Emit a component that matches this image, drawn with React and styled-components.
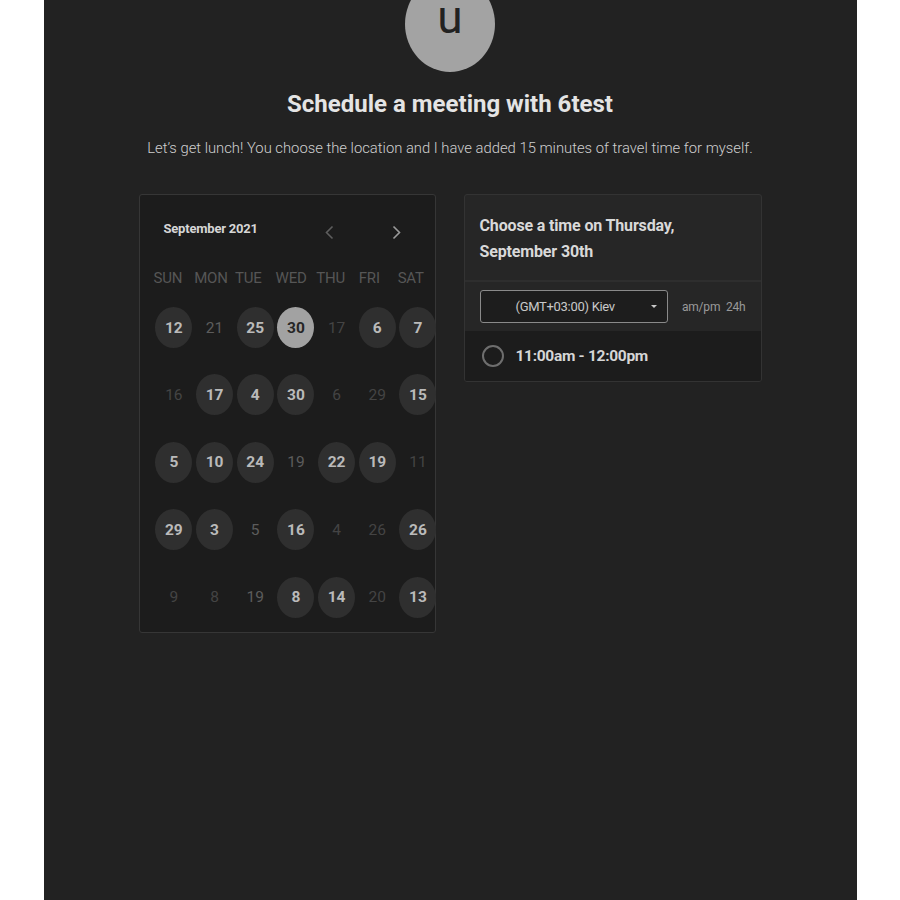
import React from 'react';
import styled, { createGlobalStyle } from 'styled-components';

const GlobalStyle = createGlobalStyle`
  html, body {
    margin: 0;
    padding: 0;
    background: #ffffff;
    font-family: Roboto, "Liberation Sans", sans-serif;
  }
`;

const Page = styled.div`
  width: 813px;
  min-height: 900px;
  margin: 0 auto;
  background: #222222;
  display: flex;
  flex-direction: column;
  align-items: center;
  overflow: hidden;
`;

const Avatar = styled.div`
  width: 90px;
  height: 96px;
  margin-top: -24px;
  border-radius: 50%;
  background: #a3a3a3;
  color: #222;
  font-size: 46px;
  line-height: 1;
  display: flex;
  justify-content: center;
  padding-top: 18px;
  box-sizing: border-box;
`;

const Title = styled.h1`
  margin: 18px 0 0;
  font-size: 24px;
  font-weight: 700;
  letter-spacing: 0;
  color: #e4e4e4;
`;

const Subtitle = styled.p`
  margin: 21px 0 0;
  font-size: 14.8px;
  font-weight: 300;
  color: #cfcfcf;
`;

const Cards = styled.div`
  display: flex;
  gap: 28px;
  align-items: flex-start;
  margin-top: 37px;
`;

const CalendarCard = styled.div`
  position: relative;
  width: 297px;
  height: 439px;
  box-sizing: border-box;
  background: #1c1c1c;
  border: 1px solid #363636;
  border-radius: 3px;
  padding: 24px 0 0 14px;
`;

const CalHeader = styled.div`
  display: flex;
  align-items: center;
  padding-left: 10px;
  height: 18px;
`;

const MonthLabel = styled.div`
  font-size: 13px;
  font-weight: 700;
  color: #d6d6d6;
  letter-spacing: -0.2px;
  width: 159px;
`;

const NavButton = styled.div`
  width: 14px;
  display: flex;
  justify-content: center;
  margin-top: 8px;
  margin-right: ${p => p.gap || 0}px;
  color: ${p => (p.dim ? '#5e5e5e' : '#9a9a9a')};
`;

const DayGrid = styled.div`
  display: grid;
  grid-template-columns: repeat(7, 40.7px);
  margin-top: 32px;
  position: relative;
  z-index: 1;
`;

const WeekDay = styled.div`
  text-align: center;
  padding-right: 16px;
  font-size: 15px;
  letter-spacing: -0.2px;
  color: #565656;
  height: 18px;
  margin-bottom: 20px;
  white-space: nowrap;
`;

const DayCell = styled.div`
  height: 67.4px;
  display: flex;
  justify-content: center;
`;

const Day = styled.div`
  width: 37px;
  height: 41px;
  border-radius: 50%;
  display: flex;
  align-items: center;
  justify-content: center;
  font-size: 15.5px;
  font-weight: ${p => (p.kind === 'off' ? 400 : 700)};
  background: ${p => (p.kind === 'on' ? '#2f2f2f' : p.kind === 'sel' ? '#a2a2a2' : 'transparent')};
  color: ${p => (p.kind === 'on' ? '#bababa' : p.kind === 'sel' ? '#262626' : p.faint ? '#444' : '#5c5c5c')};
`;

const TimeCard = styled.div`
  width: 298px;
  box-sizing: border-box;
  background: #262626;
  border: 1px solid #333;
  border-radius: 3px;
  overflow: hidden;
`;

const TimeHeader = styled.div`
  padding: 18px 15px 15px;
  font-size: 16px;
  font-weight: 700;
  line-height: 26px;
  letter-spacing: -0.15px;
  color: #d9d9d9;
  border-bottom: 2px solid #2e2e2e;
`;

const ControlRow = styled.div`
  display: flex;
  align-items: center;
  padding: 8px 15px;
  gap: 14px;
`;

const ZoneSelect = styled.div`
  width: 189px;
  height: 33px;
  box-sizing: border-box;
  border: 1px solid #8a8a8a;
  border-radius: 3px;
  background: #1d1d1d;
  display: flex;
  align-items: center;
  padding: 0 10px 0 35px;
  font-size: 13px;
  letter-spacing: -0.3px;
  color: #c9c9c9;
`;

const ZoneText = styled.span`
  flex: 1;
`;

const Caret = styled.span`
  width: 0;
  height: 0;
  border-left: 3px solid transparent;
  border-right: 3px solid transparent;
  border-top: 3px solid #c9c9c9;
`;

const FormatToggle = styled.div`
  font-size: 12px;
  color: #9a9a9a;
  letter-spacing: -0.2px;
  word-spacing: 3px;
  white-space: nowrap;
`;

const Slot = styled.div`
  display: flex;
  align-items: center;
  gap: 12px;
  height: 50px;
  padding: 0 17px;
  background: #1c1c1c;
`;

const Radio = styled.span`
  width: 18px;
  height: 18px;
  border-radius: 50%;
  border: 2px solid #6e6e6e;
`;

const SlotText = styled.span`
  font-size: 15.5px;
  font-weight: 700;
  letter-spacing: -0.3px;
  color: #d6d6d6;
`;

const weekDays = ['SUN', 'MON', 'TUE', 'WED', 'THU', 'FRI', 'SAT'];

// on = available, sel = selected, off = unavailable (third item: fainter)
const rows = [
  [['12', 'on'], ['21', 'off'], ['25', 'on'], ['30', 'sel'], ['17', 'off', 1], ['6', 'on'], ['7', 'on']],
  [['16', 'off', 1], ['17', 'on'], ['4', 'on'], ['30', 'on'], ['6', 'off', 1], ['29', 'off', 1], ['15', 'on']],
  [['5', 'on'], ['10', 'on'], ['24', 'on'], ['19', 'off'], ['22', 'on'], ['19', 'on'], ['11', 'off', 1]],
  [['29', 'on'], ['3', 'on'], ['5', 'off'], ['16', 'on'], ['4', 'off', 1], ['26', 'off', 1], ['26', 'on']],
  [['9', 'off', 1], ['8', 'off', 1], ['19', 'off'], ['8', 'on'], ['14', 'on'], ['20', 'off', 1], ['13', 'on']],
];

const Chevron = ({ dir }) => (
  <svg width="9" height="15" viewBox="0 0 9 15" fill="none">
    <path
      d={dir === 'left' ? 'M7.5 1.5 L1.5 7.5 L7.5 13.5' : 'M1.5 1.5 L7.5 7.5 L1.5 13.5'}
      stroke="currentColor"
      strokeWidth="1.6"
    />
  </svg>
);

export default function App() {
  return (
    <>
      <GlobalStyle />
      <Page>
        <Avatar>u</Avatar>
        <Title>Schedule a meeting with 6test</Title>
        <Subtitle>
          Let’s get lunch! You choose the location and I have added 15 minutes of travel time for myself.
        </Subtitle>
        <Cards>
          <CalendarCard>
            <CalHeader>
              <MonthLabel>September 2021</MonthLabel>
              <NavButton dim gap={53}>
                <Chevron dir="left" />
              </NavButton>
              <NavButton>
                <Chevron dir="right" />
              </NavButton>
            </CalHeader>
            <DayGrid>
              {weekDays.map(d => (
                <WeekDay key={d}>{d}</WeekDay>
              ))}
              {rows.flat().map(([n, k, f], i) => (
                <DayCell key={i}>
                  <Day kind={k} faint={f}>{n}</Day>
                </DayCell>
              ))}
            </DayGrid>
          </CalendarCard>
          <TimeCard>
            <TimeHeader>
              Choose a time on Thursday,
              <br />
              September 30th
            </TimeHeader>
            <ControlRow>
              <ZoneSelect>
                <ZoneText>(GMT+03:00) Kiev</ZoneText>
                <Caret />
              </ZoneSelect>
              <FormatToggle>am/pm 24h</FormatToggle>
            </ControlRow>
            <Slot>
              <Radio />
              <SlotText>11:00am - 12:00pm</SlotText>
            </Slot>
          </TimeCard>
        </Cards>
      </Page>
    </>
  );
}
